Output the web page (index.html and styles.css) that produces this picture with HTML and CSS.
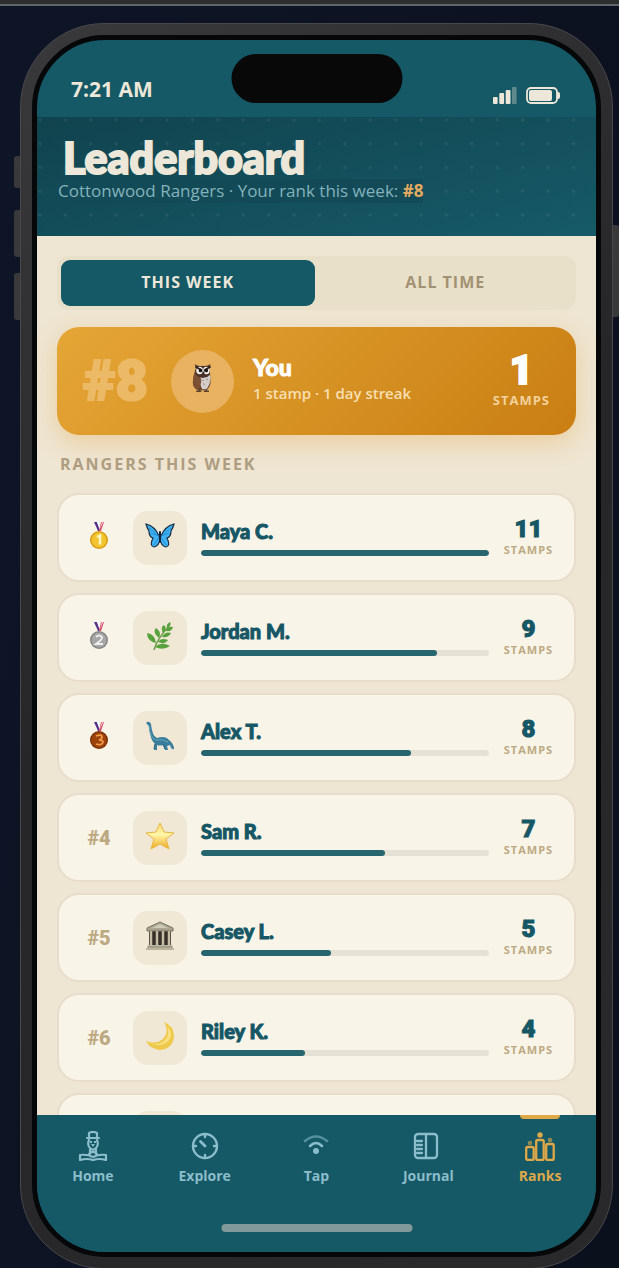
FILE: index.html
```html
<!DOCTYPE html>
<html lang="en">
<head>
<meta charset="utf-8">
<meta name="viewport" content="width=device-width, initial-scale=1">
<title>Leaderboard</title>
<link rel="stylesheet" href="styles.css">
</head>
<body>
<div class="strip"></div>
<div class="stage">
<div class="phone">
<span class="key key-action"></span><span class="key key-up"></span><span class="key key-down"></span><span class="key key-power"></span>
<div class="screen">
  <div class="status">
    <span class="time">7:21 AM</span>
    <span class="island"></span>
    <span class="status-icons">
      <svg width="24" height="18" viewBox="0 0 24 18" fill="#ece7d8"><rect x="0" y="10" width="4.600" height="7" rx="1"/><rect x="6.300" y="6" width="4.800" height="11" rx="1"/><rect x="12.700" y="3" width="4.800" height="14" rx="1"/><rect x="19" y="0" width="4.600" height="17" rx="1" opacity=".35"/></svg>
      <svg width="34" height="18" viewBox="0 0 34 18"><rect x="1" y="1" width="30" height="15" rx="4" fill="none" stroke="#ece7d8" stroke-width="1.800"/><rect x="3" y="3" width="23" height="11" rx="2" fill="#ece7d8"/><path d="M31 5h1q2 0 2 2v3q0 2-2 2h-1z" fill="#ece7d8"/></svg>
    </span>
  </div>
  <header class="header">
    <h1>Leaderboard</h1>
    <p>Cottonwood Rangers · Your rank this week: <strong>#8</strong></p>
  </header>
  <main class="content">
    <div class="tabs"><button class="tab tab-on" type="button">THIS WEEK</button><button class="tab" type="button">ALL TIME</button></div>
    <section class="you">
      <span class="you-rank">#8</span>
      <span class="you-avatar"><svg width="22" height="32" viewBox="0 0 26 34" preserveAspectRatio="none"><path d="M4 8Q1 15 1 22q1 7 7 8h9q5-3 5-10L21 7z" fill="#694329"/><path d="M10 15q8-4 12 0 0 9-5 14h-5q-4-6-2-14z" fill="#d4ccc8"/><path d="M3 12q8 2 8 9l-3 9Q1 28 1 22z" fill="#7b5035"/><path d="M3 2q4 3 9 2 6 1 10-2l-2 5q3 6-2 9l-6 1-6-2Q2 11 5 6z" fill="#4b3128"/><circle cx="9" cy="9" r="4" fill="#f3eee7"/><circle cx="17" cy="9" r="4" fill="#f3eee7"/><path d="M4 5l8 4M22 5l-8 4" stroke="#30221e" stroke-width="2"/><circle cx="10" cy="9" r="2" fill="#191416"/><circle cx="17" cy="9" r="2" fill="#191416"/><path d="M12 10h3l-1 4z" fill="#33262a"/><path d="M12 19l2 1M17 18l2 1M13 23l2 1" stroke="#8f7d75"/><path d="M5 31h6m3 0h6M9 29l-1 3m9-3v3" stroke="#59402d" stroke-width="1.500"/></svg></span>
      <div class="you-info"><h2>You</h2><p>1 stamp · 1 day streak</p></div>
      <div class="you-score"><strong>1</strong><span>STAMPS</span></div>
    </section>
    <h2 class="label">RANGERS THIS WEEK</h2>
    <ol class="list">
      <li class="row"><span class="rank"><svg class="medal" viewBox="0 0 18 28"><path d="M4 0h3l3 9H8z" fill="#55308d"/><path d="M7 0h2l1 7z" fill="#fff"/><path d="M14 0h-3L9 9h2z" fill="#d8516b"/><path d="M12 0h1l-3 7z" fill="#fff"/><circle cx="9" cy="18" r="9" fill="#d99c16"/><circle cx="9" cy="18" r="7.500" fill="#f2c52f"/><path d="M7 15l3-1.500v9" fill="none" stroke="#fff5c5" stroke-width="2.500"/></svg></span><span class="avatar"><svg width="30" height="26" viewBox="0 0 30 26"><path d="M14 13Q10 3 1 1q1 4 3 7 0 6 4 7-4 8 1 9 5-1 6-8 1 7 6 8 5-1 1-9 4-1 4-7 2-3 3-7-9 2-13 12z" fill="#3eb2f2" stroke="#172b43" stroke-width="1.200"/><path d="M14 13L4 5m10 8L6 10m8 4l-5 8m7-9l10-8m-10 8l8-3m-8 4l5 8" stroke="#1d7fc0" stroke-width=".7"/><path d="M15 9v10" stroke="#17253a" stroke-width="2" stroke-linecap="round"/></svg></span><div class="info"><h3>Maya C.</h3><div class="bar"><i style="width:100%"></i></div></div><div class="score"><strong>11</strong><span>STAMPS</span></div></li>
      <li class="row"><span class="rank"><svg class="medal" viewBox="0 0 18 28"><path d="M4 0h3l3 9H8z" fill="#55308d"/><path d="M7 0h2l1 7z" fill="#fff"/><path d="M14 0h-3L9 9h2z" fill="#d8516b"/><path d="M12 0h1l-3 7z" fill="#fff"/><circle cx="9" cy="18" r="9" fill="#858585"/><circle cx="9" cy="18" r="7.500" fill="#a6a6a6"/><path d="M6 15q3-3 6 0 1 2-6 7h7" fill="none" stroke="#eee" stroke-width="2"/></svg></span><span class="avatar"><svg width="28" height="28" viewBox="0 0 28 28"><path d="M8 28Q11 17 23 4" fill="none" stroke="#6f9c4a" stroke-width="1.500"/><g fill="#58a23e"><path d="M10 21Q1 19 1 11q8 1 9 10zM13 16Q6 10 10 6q6 4 3 10zM17 11q-3-6 1-8 4 4-1 8zM21 6q-1-4 3-6 2 4-3 6zM20 9q1-5 7-4-1 5-7 4zM16 15q3-6 9-4-2 5-9 4zM12 20q3-5 10-2-3 5-10 2zM9 25q6-6 15-1-7 5-15 1z"/></g></svg></span><div class="info"><h3>Jordan M.</h3><div class="bar"><i style="width:82%"></i></div></div><div class="score"><strong>9</strong><span>STAMPS</span></div></li>
      <li class="row"><span class="rank"><svg class="medal" viewBox="0 0 18 28"><path d="M4 0h3l3 9H8z" fill="#55308d"/><path d="M7 0h2l1 7z" fill="#fff"/><path d="M14 0h-3L9 9h2z" fill="#d8516b"/><path d="M12 0h1l-3 7z" fill="#fff"/><circle cx="9" cy="18" r="9" fill="#7e3207"/><circle cx="9" cy="18" r="7.500" fill="#9d430d"/><path d="M6 14q6-2 6 1 0 2-3 3 4 0 4 2-1 4-7 2" fill="none" stroke="#f39a49" stroke-width="1.800"/></svg></span><span class="avatar"><svg width="30" height="30" viewBox="0 0 30 30"><path d="M1 2q3-3 5 1 1 12 6 14 8-3 12 2 5 4 5 9-3 1-4-4l-3 1 1 4h-3l-2-5q-3 1-6 0v5H9l1-6q-5-4-6-18z" fill="#397e9d"/><path d="M4 5q1 12 7 14 7-1 12 2" fill="none" stroke="#69a5b9"/><path d="M10 23l-1 5m9-5l2 5" stroke="#2b6079"/></svg></span><div class="info"><h3>Alex T.</h3><div class="bar"><i style="width:73%"></i></div></div><div class="score"><strong>8</strong><span>STAMPS</span></div></li>
      <li class="row"><span class="rank">#4</span><span class="avatar"><svg width="30" height="28" viewBox="0 0 30 28"><defs><linearGradient id="star" x2="0" y2="1"><stop stop-color="#ffdf73"/><stop offset=".45" stop-color="#fff5a9"/><stop offset="1" stop-color="#efa91f"/></linearGradient></defs><path d="M15 1l4 9 10 1-8 6 3 10-9-5-9 5 3-10-8-6 10-1z" fill="url(#star)" stroke="#e8b542" stroke-linejoin="round"/></svg></span><div class="info"><h3>Sam R.</h3><div class="bar"><i style="width:64%"></i></div></div><div class="score"><strong>7</strong><span>STAMPS</span></div></li>
      <li class="row"><span class="rank">#5</span><span class="avatar"><svg width="28" height="30" viewBox="0 0 28 30"><path d="M3 8h22v17H3z" fill="#36302a"/><path d="M1 7L14 1l13 6v3H1z" fill="#aaa58f" stroke="#777263"/><path d="M6 7l8-4 8 4z" fill="#d0cab3"/><path d="M5 10v15M11 10v15M17 10v15M23 10v15" stroke="#c5bea5" stroke-width="2.500"/><path d="M2 24h24v3h2v2H0v-2h2z" fill="#bdb69e"/><path d="M1 26h26" stroke="#8d8876"/></svg></span><div class="info"><h3>Casey L.</h3><div class="bar"><i style="width:45%"></i></div></div><div class="score"><strong>5</strong><span>STAMPS</span></div></li>
      <li class="row"><span class="rank">#6</span><span class="avatar"><svg width="30" height="28" viewBox="0 0 30 28"><path d="M19 0q10 4 10 14-1 13-14 14Q5 27 1 19q10 4 17-2 7-8 1-17z" fill="#efc949"/><path d="M2 20q12 5 19-3 4-7 1-13 7 7 2 14-7 9-22 2z" fill="#f9df83"/></svg></span><div class="info"><h3>Riley K.</h3><div class="bar"><i style="width:36%"></i></div></div><div class="score"><strong>4</strong><span>STAMPS</span></div></li>
      <li class="row"><span class="rank"></span><span class="avatar"></span></li>
    </ol>
  </main>
  <nav class="nav">
    <a href="#home"><svg viewBox="0 0 30 30"><g fill="none" stroke="currentColor" stroke-width="2.200" stroke-linejoin="round" stroke-linecap="round"><path d="M11 6V2q4-2 8 0v4M9 7h12M11 9q-2 5 1 8 3 3 6 0 3-3 1-8M12 18v5m6-5v5M11 23q4-4 8 0M15 26q-6-3-13-2v5q7-2 13 0 6-2 13 0v-5q-7-1-13 2z"/></g><path d="M12 10h2v2h-2zM16 10h2v2h-2zM13 13h4l-2 3z" fill="currentColor"/></svg><span>Home</span></a>
    <a href="#explore"><svg viewBox="0 0 30 30"><g fill="none" stroke="currentColor" stroke-width="2.400" stroke-linecap="round"><circle cx="15" cy="15" r="12"/><path d="M15 3v3m0 18v3M3 15h3m18 0h3"/><path d="M10.500 10.500l4.500 4.500" stroke-width="2.800"/></g></svg><span>Explore</span></a>
    <a href="#tap"><svg viewBox="0 0 30 30"><g fill="none" stroke="currentColor" stroke-width="2.500" stroke-linecap="round"><path d="M4 10q11-9 22 0" opacity=".55"/><path d="M9 15q6-6 12 0"/></g><circle cx="15" cy="20" r="3" fill="currentColor"/></svg><span>Tap</span></a>
    <a href="#journal"><svg viewBox="0 0 30 30"><g fill="none" stroke="currentColor" stroke-width="2.300" stroke-linecap="round"><rect x="2" y="3" width="22" height="24" rx="3"/><path d="M13 3v24M4 10h5m-5 4h5m-5 4h5m-5 4h5"/></g></svg><span>Journal</span></a>
    <a href="#ranks" class="current" aria-current="page"><svg viewBox="0 0 30 30"><g fill="none" stroke="currentColor" stroke-width="2.300"><rect x="1.200" y="16" width="7.500" height="13" rx="1.500"/><rect x="11.200" y="9" width="7.500" height="20" rx="1.500"/><rect x="21.200" y="13" width="7.500" height="16" rx="1.500"/></g><g fill="currentColor"><circle cx="15" cy="4" r="2.700"/><circle cx="5" cy="12" r="2.300" opacity=".6"/><circle cx="25" cy="9" r="2.300" opacity=".6"/></g></svg><span>Ranks</span></a>
    <span class="home-bar"></span>
  </nav>
</div>
</div>
</div>
</body>
</html>
```
FILE: styles.css
```css
* { box-sizing: border-box; }
body { margin: 0; height: 100vh; overflow: hidden; display: flex; flex-direction: column; background: linear-gradient(100deg, #0e1526, #0b101d); font-family: "Open Sans", "Noto Sans", sans-serif; color: #165766; }
h1, h2, h3, p, ol { margin: 0; padding: 0; }
.strip { flex: none; height: 6px; background: #2e2e2e; border-bottom: 2px solid #606669; }
.stage { flex: 1; min-height: 0; display: flex; padding: 17px 6px 0 20px; }
.phone { position: relative; flex: 1; min-width: 0; display: flex; margin-bottom: -1px; padding: 11px; border: 1px solid #48474b; border-radius: 84px; background: linear-gradient(145deg, #39383b, #262628 45%, #29292b); }
.key { position: absolute; left: -7px; width: 6px; border-radius: 3px 0 0 3px; background: #39393b; }
.key-action { top: 132px; height: 32px; }
.key-up { top: 186px; height: 47px; }
.key-down { top: 249px; height: 47px; }
.key-power { left: auto; right: -7px; top: 201px; height: 92px; border-radius: 0 3px 3px 0; }
.screen { flex: 1; min-width: 0; display: flex; flex-direction: column; overflow: hidden; border: 5px solid #050708; border-radius: 73px; background: #155866; }
.status { position: relative; flex: none; height: 77px; display: flex; justify-content: space-between; align-items: flex-end; padding: 0 36px 12px 34px; color: #ece7d8; }
.time { font-size: 21px; line-height: 32px; font-weight: 700; }
.island { position: absolute; top: 14px; left: 50%; width: 171px; height: 49px; transform: translateX(-50%); border-radius: 25px; background: #080808; }
.status-icons { display: flex; gap: 9px; }
.header { flex: none; height: 119px; padding: 20px 21px; background: radial-gradient(circle at 3px 3px, #ffffff14 1px, transparent 2px) 0 0 / 25px 25px round, linear-gradient(165deg, #10434e, #165a68); }
.header h1 { padding-left: 5px; font-family: Lato, sans-serif; font-size: 43px; line-height: 42px; font-weight: 900; color: #ece7d8; -webkit-text-stroke: 2px #ece7d8; }
.header p { width: max-content; font-size: 17px; line-height: 24px; color: #84b2bb; background: #124b57; }
.header strong { color: #e4ab60; }
.content { flex: 1; min-height: 0; overflow: hidden; padding: 20px 20px 0; background: #eee5d2; }
.tabs { display: flex; gap: 4px; height: 54px; padding: 4px; border-radius: 12px; background: #e9e0ca; }
.tab { flex: 1; padding: 0 0 2px; border: 0; border-radius: 9px; background: transparent; color: #a29273; font: 700 16px/20px "Open Sans", sans-serif; letter-spacing: 1px; }
.tab-on { background: #155866; color: #ece7d8; }
.you { display: flex; align-items: center; height: 108px; margin-top: 17px; padding: 0 26px; border-radius: 22px; background: linear-gradient(135deg, #e5a636, #c97e12); box-shadow: 0 8px 24px #e8a33855; color: #fff; }
.you-rank { width: 88px; font-family: Roboto, sans-serif; font-size: 56px; line-height: 60px; font-weight: 900; color: #ecb966; -webkit-text-stroke: 2px #ecb966; }
.you-avatar { display: flex; align-items: center; justify-content: center; width: 63px; height: 63px; margin-right: 19px; padding-bottom: 6px; border-radius: 50%; background: #e9b260; }
.you-info { flex: 1; padding-bottom: 4px; }
.you-info h2 { font-family: Lato, sans-serif; font-size: 23px; line-height: 28px; font-weight: 900; -webkit-text-stroke: 1px #fff; }
.you-info p { font-size: 15px; line-height: 24px; font-weight: 600; color: #f8dfb2; }
.you-score { display: flex; flex-direction: column; align-items: center; }
.you-score strong { font-family: Roboto, sans-serif; font-size: 40px; line-height: 38px; font-weight: 900; -webkit-text-stroke: 2px #fff; }
.you-score span { font-size: 13px; line-height: 20px; font-weight: 700; letter-spacing: 1px; color: #f3d19c; }
.label { margin: 18px 3px; font-size: 16px; line-height: 22px; font-weight: 700; letter-spacing: 2px; color: #ae9d80; }
.list { display: flex; flex-direction: column; gap: 11px; list-style: none; }
.row { flex: none; display: flex; align-items: center; height: 89px; padding: 0 20px 0 19px; border: 2px solid #e8dccb; border-radius: 22px; background: #f9f4e8; }
.rank { display: flex; justify-content: center; width: 42px; margin-right: 13px; font-family: Roboto, sans-serif; font-size: 20px; line-height: 24px; font-weight: 900; color: #bca982; }
.medal { width: 18px; height: 28px; margin-bottom: 3px; }
.avatar { display: flex; align-items: center; justify-content: center; width: 54px; height: 54px; margin-right: 14px; padding-bottom: 3px; border-radius: 15px; background: #f0e7d4; }
.info { flex: 1; min-width: 0; padding-bottom: 2px; }
.info h3 { font-family: Lato, sans-serif; font-size: 20px; line-height: 26px; font-weight: 900; -webkit-text-stroke: 1px #165766; }
.bar { height: 6px; margin-top: 6px; border-radius: 3px; background: #e6e1d5; overflow: hidden; }
.bar i { display: block; height: 6px; border-radius: 3px; background: #27666f; }
.score { display: flex; flex-direction: column; align-items: center; width: 51px; margin-left: 14px; padding-bottom: 2px; }
.score strong { font-family: Roboto, sans-serif; font-size: 24px; line-height: 26px; font-weight: 900; -webkit-text-stroke: 1px #165766; }
.score span { font-size: 11px; line-height: 16px; font-weight: 700; letter-spacing: 1px; color: #bca982; }
.nav { position: relative; flex: none; display: flex; height: 137px; align-items: flex-start; background: #155866; }
.nav a { position: relative; flex: 1; display: flex; flex-direction: column; align-items: center; padding-top: 16px; color: #8bbdca; text-decoration: none; font-size: 14px; line-height: 20px; font-weight: 700; }
.nav svg { width: 30px; height: 30px; margin-bottom: 5px; }
.nav .current { color: #dfa94a; }
.nav .current::before { content: ""; position: absolute; top: 0; width: 40px; height: 4px; border-radius: 0 0 4px 4px; background: #dfa94a; }
.home-bar { position: absolute; bottom: 20px; left: 50%; width: 191px; height: 8px; transform: translateX(-50%); border-radius: 4px; background: #82999a; }
```
